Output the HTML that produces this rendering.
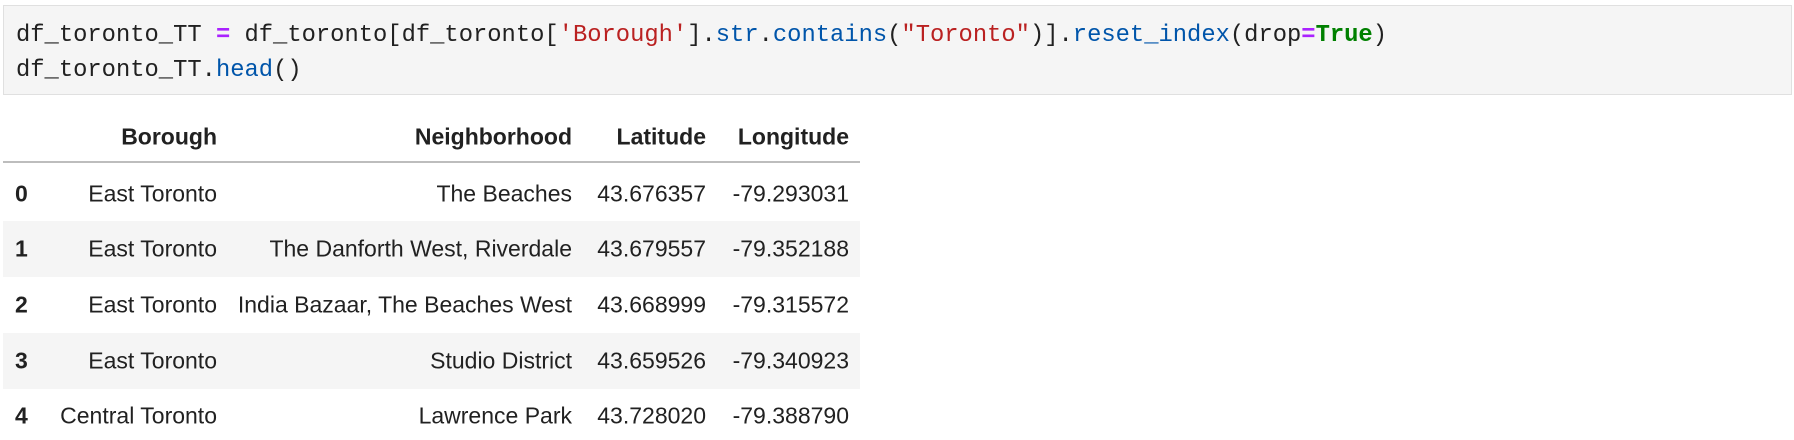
<!DOCTYPE html>
<html><head><meta charset="utf-8"><style>
body{margin:0;width:1794px;height:440px;background:#fff;position:relative;overflow:hidden;font-family:"Liberation Sans",sans-serif;color:#212121}
.code{position:absolute;left:3px;top:5px;width:1787px;height:88px;background:#f5f5f5;border:1px solid #e0e0e0;}
.code pre{margin:0;position:absolute;left:12px;top:0px;font-family:"Liberation Mono",monospace;font-size:23.8px;line-height:35px;color:#212121;padding-top:12px}
.k{color:#aa22ff;font-weight:bold}.s{color:#ba2121}.f{color:#0055aa}.b{color:#008000;font-weight:bold}
.t{position:absolute;font-size:23px;white-space:nowrap;transform:translateY(-50%)}
.h{font-weight:bold}
.stripe{position:absolute;left:3px;width:857px;height:56px;background:#f5f5f5}
.line{position:absolute;left:3px;width:857px;top:161px;height:2px;background:#bdbdbd}
</style></head><body>
<div class="code"><pre>df_toronto_TT <span class="k">=</span> df_toronto[df_toronto[<span class="s">'Borough'</span>].<span class="f">str</span>.<span class="f">contains</span>(<span class="s">"Toronto"</span>)].<span class="f">reset_index</span>(drop<span class="k">=</span><span class="b">True</span>)
df_toronto_TT.<span class="f">head</span>()</pre></div>
<div class="line"></div>
<div class="stripe" style="top:221px"></div>
<div class="stripe" style="top:333px"></div>
<div id="tbl"></div>
<script>
var cols=[217,572,706,849];
var hdr=["Borough","Neighborhood","Latitude","Longitude"];
var rows=[["0","East Toronto","The Beaches","43.676357","-79.293031"],
["1","East Toronto","The Danforth West, Riverdale","43.679557","-79.352188"],
["2","East Toronto","India Bazaar, The Beaches West","43.668999","-79.315572"],
["3","East Toronto","Studio District","43.659526","-79.340923"],
["4","Central Toronto","Lawrence Park","43.728020","-79.388790"]];
var ys=[194,249,305,361,416];
var h="";
function cell(txt,right,y,b){return '<div class="t'+(b?' h':'')+'" style="right:'+(1794-right)+'px;top:'+y+'px">'+txt+'</div>';}
hdr.forEach(function(t,i){h+=cell(t,cols[i],137,true);});
rows.forEach(function(r,j){
 h+='<div class="t h" style="left:15px;top:'+ys[j]+'px">'+r[0]+'</div>';
 for(var i=1;i<5;i++)h+=cell(r[i],cols[i-1],ys[j],false);
});
document.getElementById("tbl").innerHTML=h;
</script>
</body></html>
